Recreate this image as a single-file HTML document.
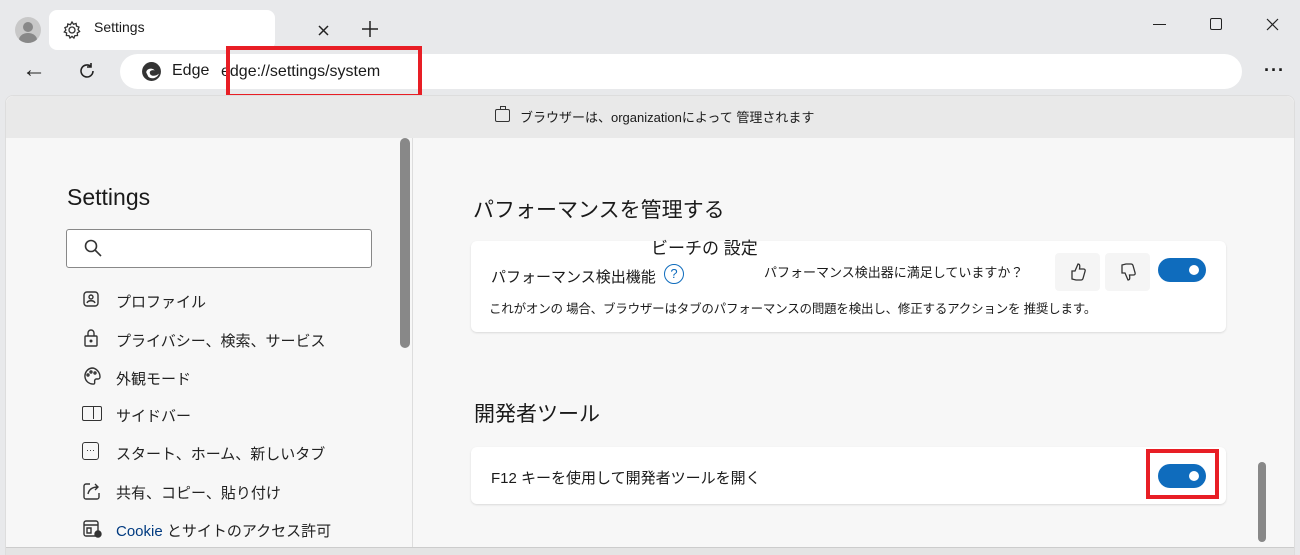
<!DOCTYPE html>
<html><head><meta charset="utf-8"><style>
*{margin:0;padding:0;box-sizing:border-box}
body{width:1300px;height:554px;overflow:hidden;background:#e8e9eb;font-family:"Liberation Sans","Noto Sans CJK JP",sans-serif;color:#1a1a1a;position:relative}
.a{position:absolute}
.card{position:absolute;background:#fff;border-radius:6px;box-shadow:0 1px 2px rgba(0,0,0,.12)}
.tog{position:absolute;width:48px;height:24px;border-radius:12px;background:#0f6cbd}
.tog:after{content:"";position:absolute;right:7px;top:7px;width:10px;height:10px;border-radius:50%;background:#fff}
.nav{position:absolute;left:116px;font-size:15px;color:#222}
.ic{position:absolute;left:82px}
</style></head><body>
<div class="a" style="left:15px;top:17px;width:26px;height:26px;border-radius:50%;background:#c8c8c8;overflow:hidden"><div class="a" style="left:8px;top:5px;width:10px;height:10px;border-radius:50%;background:#888"></div><div class="a" style="left:4px;top:16px;width:18px;height:14px;border-radius:50%;background:#888"></div></div>
<div class="a" style="left:49px;top:10px;width:226px;height:40px;background:#fff;border-radius:8px"></div>
<svg class="a" style="left:62px;top:20px" width="20" height="20" viewBox="0 0 20 20" fill="none" stroke="#333" stroke-width="1.3"><circle cx="10" cy="10" r="3"/><path d="M10 2l1.5 2.2 2.6-.7.4 2.6 2.5 1-1 2.4 1.6 2-2.3 1.4.2 2.6-2.6.1-1 2.4-1.9-1.7-2 1.7-1-2.4-2.6-.1.2-2.6L2.3 12l1.6-2-1-2.4 2.5-1 .4-2.6 2.6.7z"/></svg>
<div class="a" style="left:94px;top:19px;font-size:14px">Settings</div>
<svg class="a" style="left:318px;top:25px" width="11" height="11" stroke="#222" stroke-width="1.5"><path d="M1 1l9 9M10 1l-9 9"/></svg>
<svg class="a" style="left:361px;top:20px" width="18" height="18" stroke="#222" stroke-width="1.5"><path d="M9 1v16M1 9h16"/></svg>
<div class="a" style="left:1153px;top:24px;width:13px;height:1px;background:#222"></div>
<div class="a" style="left:1210px;top:18px;width:12px;height:12px;border:1.2px solid #222;border-radius:2px"></div>
<svg class="a" style="left:1266px;top:18px" width="13" height="13" stroke="#222" stroke-width="1.2"><path d="M1 1l11 11M12 1L1 12"/></svg>
<div class="a" style="left:22px;top:56px;font-size:24px;color:#222">←</div>
<svg class="a" style="left:77px;top:61px" width="20" height="20" viewBox="0 0 20 20" fill="none" stroke="#222" stroke-width="1.6"><path d="M16 10a6 6 0 1 1-2-4.5M14 2v4h-4"/></svg>
<div class="a" style="left:120px;top:54px;width:1122px;height:35px;background:#fff;border-radius:18px"></div>
<svg class="a" style="left:141px;top:61px" width="21" height="21" viewBox="0 0 20 20"><circle cx="10" cy="10" r="9" fill="#333"/><path d="M5 11c0-4 6-5 8-2-3-1-6 1-4 4 2 2 6 1 8-1-1 4-7 6-10 3" fill="#fff"/></svg>
<div class="a" style="left:172px;top:62px;font-size:16px">Edge</div>
<div class="a" style="left:221px;top:63px;font-size:16px">edge://settings/system</div>
<div class="a" style="left:226px;top:46px;width:196px;height:52px;border:4px solid #e81e25"></div>
<div class="a" style="left:1264px;top:60px;font-size:18px;font-weight:bold;letter-spacing:1px">···</div>
<div class="a" style="left:5px;top:95px;width:1290px;height:460px;background:#f7f7f7;border-radius:8px 8px 0 0;border:1px solid #ddd"></div>
<div class="a" style="left:6px;top:96px;width:1288px;height:42px;background:#e9e9e9;border-radius:8px 8px 0 0"></div>
<div class="a" style="left:495px;top:109px;width:15px;height:13px;border:1.3px solid #333;border-radius:2px"></div>
<div class="a" style="left:500px;top:106px;width:6px;height:4px;border:1.3px solid #333;border-bottom:none"></div>
<div class="a" style="left:520px;top:107px;font-size:13px">ブラウザーは、organizationによって 管理されます</div>
<div class="a" style="left:412px;top:138px;width:1px;height:410px;background:#ddd"></div>
<div class="a" style="left:400px;top:138px;width:10px;height:210px;background:#888;border-radius:5px"></div>
<div class="a" style="left:1258px;top:462px;width:8px;height:80px;background:#888;border-radius:4px"></div>
<div class="a" style="left:6px;top:547px;width:1288px;height:8px;background:#e4e4e4;border-top:1px solid #ccc"></div>
<div class="a" style="left:67px;top:184px;font-size:23px">Settings</div>
<div class="a" style="left:66px;top:229px;width:306px;height:39px;border:1px solid #888;border-radius:3px;background:#fff"></div>
<svg class="a" style="left:84px;top:239px" width="18" height="18" fill="none" stroke="#333" stroke-width="1.6"><circle cx="7" cy="7" r="5.5"/><path d="M11 11l6 6"/></svg>
<svg class="ic" style="top:290px" width="18" height="18" fill="none" stroke="#333" stroke-width="1.4"><rect x="2" y="2" width="14" height="14" rx="3"/><circle cx="9" cy="7" r="2"/><path d="M5 13c1-3 7-3 8 0"/></svg>
<div class="nav" style="top:291px">プロファイル</div>
<svg class="ic" style="top:328px" width="18" height="20" fill="none" stroke="#333" stroke-width="1.4"><rect x="3" y="8" width="12" height="10" rx="1"/><path d="M6 8V5a3 3 0 0 1 6 0v3"/><circle cx="9" cy="13" r=".8" fill="#333"/></svg>
<div class="nav" style="top:330px">プライバシー、検索、サービス</div>
<svg class="ic" style="top:366px" width="20" height="20" fill="none" stroke="#333" stroke-width="1.4"><path d="M10 2a8 8 0 1 0 2 16c2-1-1-4 2-5h2a2 2 0 0 0 2-2c0-5-4-9-8-9z"/><circle cx="6" cy="9" r="1"/><circle cx="9" cy="6" r="1"/><circle cx="13" cy="7" r="1"/></svg>
<div class="nav" style="top:368px">外観モード</div>
<div class="ic" style="top:406px;width:20px;height:15px;border:1.4px solid #333;border-radius:2px"><div class="a" style="left:10px;top:0;width:1.4px;height:12px;background:#333"></div></div>
<div class="nav" style="top:405px">サイドバー</div>
<div class="ic" style="top:442px;width:17px;height:18px;border:1.4px solid #333;border-radius:3px;font-size:9px;line-height:14px;text-align:center">···</div>
<div class="nav" style="top:443px">スタート、ホーム、新しいタブ</div>
<svg class="ic" style="top:481px" width="20" height="20" fill="none" stroke="#333" stroke-width="1.4"><path d="M8 3H4a2 2 0 0 0-2 2v11a2 2 0 0 0 2 2h11a2 2 0 0 0 2-2v-4"/><path d="M6 13c1-5 5-7 10-7M13 3l3 3-3 3"/></svg>
<div class="nav" style="top:482px">共有、コピー、貼り付け</div>
<svg class="ic" style="top:519px" width="22" height="20" fill="none" stroke="#333" stroke-width="1.4"><rect x="2" y="2" width="14" height="15" rx="2"/><path d="M2 6h14M5 9h4v5H5z"/><circle cx="16" cy="15" r="3" fill="#333"/></svg>
<div class="nav" style="top:520px"><span style="color:#003a80">Cookie</span> とサイトのアクセス許可</div>
<div class="a" style="left:473px;top:194px;font-size:21px">パフォーマンスを管理する</div>
<div class="card" style="left:471px;top:241px;width:755px;height:91px"></div>
<div class="a" style="left:651px;top:234px;font-size:17px">ビーチの 設定</div>
<div class="a" style="left:491px;top:266px;font-size:15px">パフォーマンス検出機能</div>
<div class="a" style="left:664px;top:264px;width:20px;height:20px;border:1.5px solid #0f6cbd;border-radius:50%;color:#0f6cbd;font-size:13px;text-align:center;line-height:17px">?</div>
<div class="a" style="left:764px;top:262px;font-size:13px">パフォーマンス検出器に満足していますか？</div>
<div class="a" style="left:1055px;top:253px;width:45px;height:38px;background:#f5f5f5;border-radius:4px"></div>
<svg class="a" style="left:1069px;top:262px" width="18" height="20" fill="none" stroke="#333" stroke-width="1.3"><path d="M3 9h3l3-7c2 0 2 2 1.5 5h4c1.5 0 2 1 1.5 2.5l-2 7c-.3 1-1 1.5-2 1.5H7l-4-1z"/></svg>
<div class="a" style="left:1105px;top:253px;width:45px;height:38px;background:#f5f5f5;border-radius:4px"></div>
<svg class="a" style="left:1119px;top:262px" width="18" height="20" fill="none" stroke="#333" stroke-width="1.3"><path d="M3 11h3l3 7c2 0 2-2 1.5-5h4c1.5 0 2-1 1.5-2.5l-2-7c-.3-1-1-1.5-2-1.5H7l-4 1z"/></svg>
<div class="tog" style="left:1158px;top:258px"></div>
<div class="a" style="left:489px;top:298px;font-size:12.5px;letter-spacing:-0.2px">これがオンの 場合、ブラウザーはタブのパフォーマンスの問題を検出し、修正するアクションを 推奨します。</div>
<div class="a" style="left:474px;top:398px;font-size:21px">開発者ツール</div>
<div class="card" style="left:471px;top:447px;width:755px;height:57px"></div>
<div class="a" style="left:491px;top:467px;font-size:15px">F12 キーを使用して開発者ツールを開く</div>
<div class="tog" style="left:1158px;top:464px"></div>
<div class="a" style="left:1146px;top:449px;width:73px;height:50px;border:4px solid #e81e25"></div>
</body></html>
